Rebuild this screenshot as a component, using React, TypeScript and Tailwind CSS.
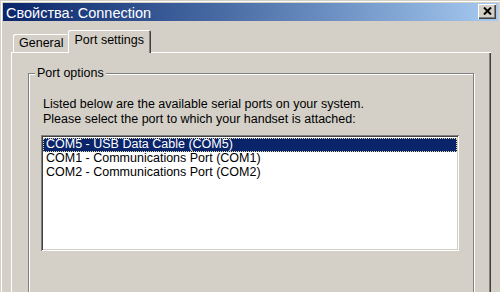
import { useState } from "react";

const ports = [
  "COM5 - USB Data Cable (COM5)",
  "COM1 - Communications Port (COM1)",
  "COM2 - Communications Port (COM2)",
];

function CloseButton() {
  return (
    <div className="flex h-[15px] w-[18px] items-center justify-center bg-[#d4d0c8] shadow-[inset_1px_1px_0_#fff,inset_-1px_-1px_0_#404040,inset_-2px_-2px_0_#808080]">
      <svg width="9" height="8" viewBox="0 0 9 8" className="-mt-px">
        <path d="M1 0.5 L8 7.5 M8 0.5 L1 7.5" stroke="#000" strokeWidth="2" />
      </svg>
    </div>
  );
}

export default function App() {
  const [selected, setSelected] = useState(0);

  return (
    <div className="h-[292px] w-[500px] overflow-hidden bg-[#d4d0c8] font-['Liberation_Sans',Arial,sans-serif] text-black">
      <div className="flex h-[340px] w-[500px] flex-col pl-[3px] pr-[2px] pt-[3px] shadow-[inset_1px_1px_0_#d4d0c8,inset_2px_2px_0_#fff]">
        {/* title bar */}
        <div className="flex h-[21px] items-center justify-between bg-gradient-to-r from-[#0a246a] to-[#a6caf0] pl-[3px] pr-[2px]">
          <span className="mt-[3px] text-[14.5px] leading-none text-white">
            Свойства: Connection
          </span>
          <CloseButton />
        </div>

        <div className="flex flex-col pl-[8px] pt-[9px]">
          {/* tabs */}
          <div className="flex h-[22px] items-end pl-[2px] text-[12.5px] leading-none">
            <div className="flex h-[18px] items-center rounded-t-[2px] pl-[6px] pr-[5px] pt-[1px] shadow-[inset_1px_1px_0_#fff]">
              General
            </div>
            <div className="relative z-10 -mb-px flex h-[23px] items-center rounded-t-[2px] bg-[#d4d0c8] pl-[6px] pr-[7px] pb-[2px] shadow-[inset_1px_1px_0_#fff,inset_-1px_0_0_#404040,inset_-2px_0_0_#808080]">
              Port settings
            </div>
          </div>

          {/* panel */}
          <div className="w-[480px] px-[17px] pt-[21px] pb-10 shadow-[inset_1px_1px_0_#fff,inset_-1px_0_0_#404040,inset_-2px_0_0_#808080]">
            <div className="relative border border-[#808080] pl-[12px] pr-[14px] pt-[23px] pb-16 shadow-[inset_1px_1px_0_#fff,1px_1px_0_#fff]">
              <span className="absolute -top-[8px] left-[6px] bg-[#d4d0c8] px-[2px] text-[12.5px] leading-[15px]">
                Port options
              </span>
              <p className="pl-[2px] text-[12.5px] leading-[15px]">
                Listed below are the available serial ports on your system.
                <br />
                Please select the port to which your handset is attached:
              </p>
              <div className="mt-[8px] h-[116px] bg-white p-[2px] shadow-[inset_1px_1px_0_#808080,inset_-1px_-1px_0_#fff,inset_2px_2px_0_#404040,inset_-2px_-2px_0_#d4d0c8]">
                <ul className="pt-px text-[12.5px] leading-none">
                  {ports.map((p, i) => (
                    <li
                      key={p}
                      onClick={() => setSelected(i)}
                      className={
                        i === selected
                          ? "flex h-[14px] items-center border border-dotted border-[#e0d8a8] bg-[#0a246a] pl-[2px] text-white"
                          : "flex h-[14px] items-center border border-transparent pl-[2px]"
                      }
                    >
                      {p}
                    </li>
                  ))}
                </ul>
              </div>
            </div>
          </div>
        </div>
      </div>
    </div>
  );
}
